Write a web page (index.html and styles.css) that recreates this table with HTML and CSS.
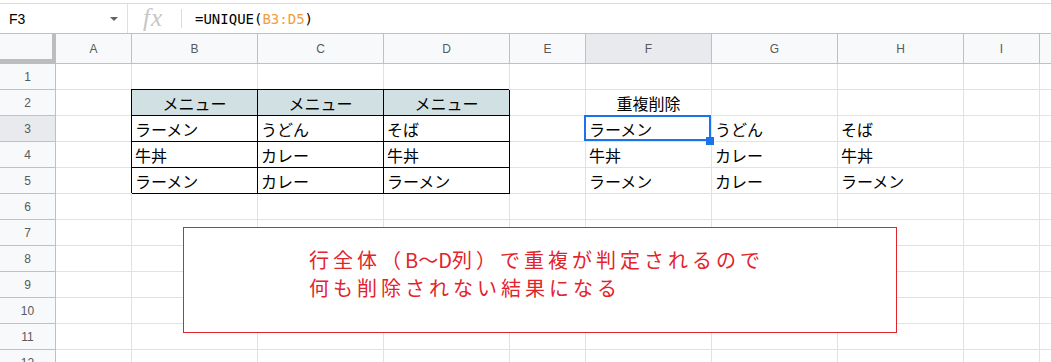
FILE: index.html
```html
<!DOCTYPE html>
<html lang="ja">
<head>
<meta charset="utf-8">
<title>UNIQUE</title>
<link rel="stylesheet" href="styles.css">
</head>
<body>
<div class="app">
  <div class="spacer"></div>
  <div class="fbar">
    <div class="namebox"><span class="ref">F3</span><span class="caret"></span></div>
    <div class="fxbox"><span class="fx">fx</span></div>
    <div class="divider"></div>
    <div class="formula">=UNIQUE(<span class="rng">B3:D5</span>)</div>
  </div>
  <div class="sheet">
    <div class="row head">
      <div class="corner"></div>
      <div class="ch">A</div><div class="ch">B</div><div class="ch">C</div><div class="ch">D</div><div class="ch">E</div><div class="ch sel">F</div><div class="ch">G</div><div class="ch">H</div><div class="ch">I</div><div class="ch last"></div>
    </div>
    <div class="row">
      <div class="rh">1</div>
      <div class="c"></div><div class="c"></div><div class="c"></div><div class="c"></div><div class="c"></div><div class="c"></div><div class="c"></div><div class="c"></div><div class="c"></div><div class="c"></div>
    </div>
    <div class="row">
      <div class="rh">2</div>
      <div class="c"></div><div class="c t th">メニュー</div><div class="c t th">メニュー</div><div class="c t th">メニュー</div><div class="c"></div><div class="c center">重複削除</div><div class="c"></div><div class="c"></div><div class="c"></div><div class="c"></div>
    </div>
    <div class="row">
      <div class="rh sel">3</div>
      <div class="c"></div><div class="c t">ラーメン</div><div class="c t">うどん</div><div class="c t">そば</div><div class="c"></div><div class="c active">ラーメン</div><div class="c">うどん</div><div class="c">そば</div><div class="c"></div><div class="c"></div>
    </div>
    <div class="row">
      <div class="rh">4</div>
      <div class="c"></div><div class="c t">牛丼</div><div class="c t">カレー</div><div class="c t">牛丼</div><div class="c"></div><div class="c">牛丼</div><div class="c">カレー</div><div class="c">牛丼</div><div class="c"></div><div class="c"></div>
    </div>
    <div class="row">
      <div class="rh">5</div>
      <div class="c"></div><div class="c t">ラーメン</div><div class="c t">カレー</div><div class="c t">ラーメン</div><div class="c"></div><div class="c">ラーメン</div><div class="c">カレー</div><div class="c">ラーメン</div><div class="c"></div><div class="c"></div>
    </div>
    <div class="row">
      <div class="rh">6</div>
      <div class="c"></div><div class="c"></div><div class="c"></div><div class="c"></div><div class="c"></div><div class="c"></div><div class="c"></div><div class="c"></div><div class="c"></div><div class="c"></div>
    </div>
    <div class="row">
      <div class="rh">7</div>
      <div class="c"></div><div class="c"></div><div class="c"></div><div class="c"></div><div class="c"></div><div class="c"></div><div class="c"></div><div class="c"></div><div class="c"></div><div class="c"></div>
    </div>
    <div class="row">
      <div class="rh">8</div>
      <div class="c"></div><div class="c"></div><div class="c"></div><div class="c"></div><div class="c"></div><div class="c"></div><div class="c"></div><div class="c"></div><div class="c"></div><div class="c"></div>
    </div>
    <div class="row">
      <div class="rh">9</div>
      <div class="c"></div><div class="c"></div><div class="c"></div><div class="c"></div><div class="c"></div><div class="c"></div><div class="c"></div><div class="c"></div><div class="c"></div><div class="c"></div>
    </div>
    <div class="row">
      <div class="rh">10</div>
      <div class="c"></div><div class="c"></div><div class="c"></div><div class="c"></div><div class="c"></div><div class="c"></div><div class="c"></div><div class="c"></div><div class="c"></div><div class="c"></div>
    </div>
    <div class="row">
      <div class="rh">11</div>
      <div class="c"></div><div class="c"></div><div class="c"></div><div class="c"></div><div class="c"></div><div class="c"></div><div class="c"></div><div class="c"></div><div class="c"></div><div class="c"></div>
    </div>
    <div class="row">
      <div class="rh">12</div>
      <div class="c"></div><div class="c"></div><div class="c"></div><div class="c"></div><div class="c"></div><div class="c"></div><div class="c"></div><div class="c"></div><div class="c"></div><div class="c"></div>
    </div>
  </div>
  <div class="note">
    <p>行全体（<span class="tight">B〜D</span>列）で重複が判定されるので</p>
    <p>何も削除されない結果になる</p>
  </div>
</div>
</body>
</html>
```
FILE: styles.css
```css
html, body {
  margin: 0;
  padding: 0;
  background: #fff;
}
.app {
  width: 1051px;
  height: 362px;
  overflow: hidden;
  font-family: "Liberation Sans", Arial, sans-serif;
}
.spacer {
  height: 3px;
}
.fbar {
  height: 31px;
  box-sizing: border-box;
  border-top: 1px solid #dadce0;
  border-bottom: 1px solid #c0c0c0;
  display: flex;
  align-items: stretch;
}
.namebox {
  width: 128px;
  box-sizing: border-box;
  border-right: 1px solid #e0e0e0;
  display: flex;
  align-items: center;
  padding-left: 9px;
  padding-right: 9px;
}
.ref {
  font-size: 14px;
  color: #000;
}
.caret {
  margin-left: auto;
  width: 0;
  height: 0;
  border-left: 4px solid transparent;
  border-right: 4px solid transparent;
  border-top: 4px solid #5f6368;
}
.fxbox {
  width: 53px;
  display: flex;
  align-items: center;
  padding-left: 15px;
  box-sizing: border-box;
}
.fx {
  font-family: "Liberation Serif", "Times New Roman", serif;
  font-style: italic;
  font-size: 25px;
  color: #c6c6c6;
  letter-spacing: 1px;
  line-height: 1;
  margin-top: -2px;
}
.divider {
  width: 1px;
  background: #dadce0;
  margin: 5px 0 5px 0;
}
.formula {
  padding-left: 13px;
  display: flex;
  align-items: center;
  font-family: "DejaVu Sans Mono", "Liberation Mono", monospace;
  font-size: 14px;
  color: #000;
  white-space: pre;
}
.rng {
  color: #f29d38;
}
.sheet {
  display: flex;
  flex-direction: column;
}
.row {
  display: grid;
  grid-template-columns: 56px 76px 126px 126px 126px 76px 126px 126px 126px 76px 1fr;
  height: 26px;
}
.row.head {
  height: 30px;
}
.corner {
  background: #f8f9fa;
  border-right: 4px solid #bdbdbd;
  border-bottom: 5px solid #bdbdbd;
}
.ch {
  background: #f8f9fa;
  border-right: 1px solid #c0c0c0;
  border-bottom: 1px solid #c0c0c0;
  display: flex;
  align-items: center;
  justify-content: center;
  font-size: 12px;
  color: #575a5e;
}
.ch.sel, .rh.sel {
  background: #e8eaed;
}
.ch.last {
  border-right: none;
}
.rh {
  background: #f8f9fa;
  border-right: 1px solid #c0c0c0;
  border-bottom: 1px solid #c0c0c0;
  display: flex;
  align-items: center;
  justify-content: center;
  font-size: 12px;
  color: #575a5e;
}
.c {
  border-right: 1px solid #e2e2e2;
  border-bottom: 1px solid #e2e2e2;
  display: flex;
  align-items: center;
  padding-left: 3px;
  font-family: "Noto Sans CJK JP", "Noto Sans", sans-serif;
  font-size: 16px;
  line-height: 20px;
  color: #000;
  white-space: nowrap;
  overflow: visible;
}
.c:last-child {
  border-right: none;
}
.t {
  border-right-color: #000;
  border-bottom-color: #000;
  box-shadow: -1px -1px 0 #000;
}
.th {
  background: #d0e0e3;
  justify-content: center;
  padding-left: 0;
}
.center {
  justify-content: center;
  padding-left: 0;
}
.active {
  position: relative;
  z-index: 2;
}
.active::before {
  content: "";
  position: absolute;
  left: -2px;
  top: -1px;
  width: 127px;
  height: 26px;
  box-sizing: border-box;
  border: 2px solid #1a73e8;
}
.active::after {
  content: "";
  position: absolute;
  left: 120px;
  top: 21px;
  width: 8px;
  height: 8px;
  background: #1a73e8;
}
.note {
  position: absolute;
  left: 183px;
  top: 227px;
  width: 714px;
  height: 106px;
  box-sizing: border-box;
  border: 1px solid #e3232a;
  background: #fff;
  padding: 18px 0 0 125px;
  font-family: "Noto Sans CJK JP", "Noto Sans", sans-serif;
  font-size: 20px;
  line-height: 28px;
  letter-spacing: 4px;
  color: #e3232a;
}
.note p {
  margin: 0;
  white-space: nowrap;
}
.tight {
  letter-spacing: 0;
}
```
